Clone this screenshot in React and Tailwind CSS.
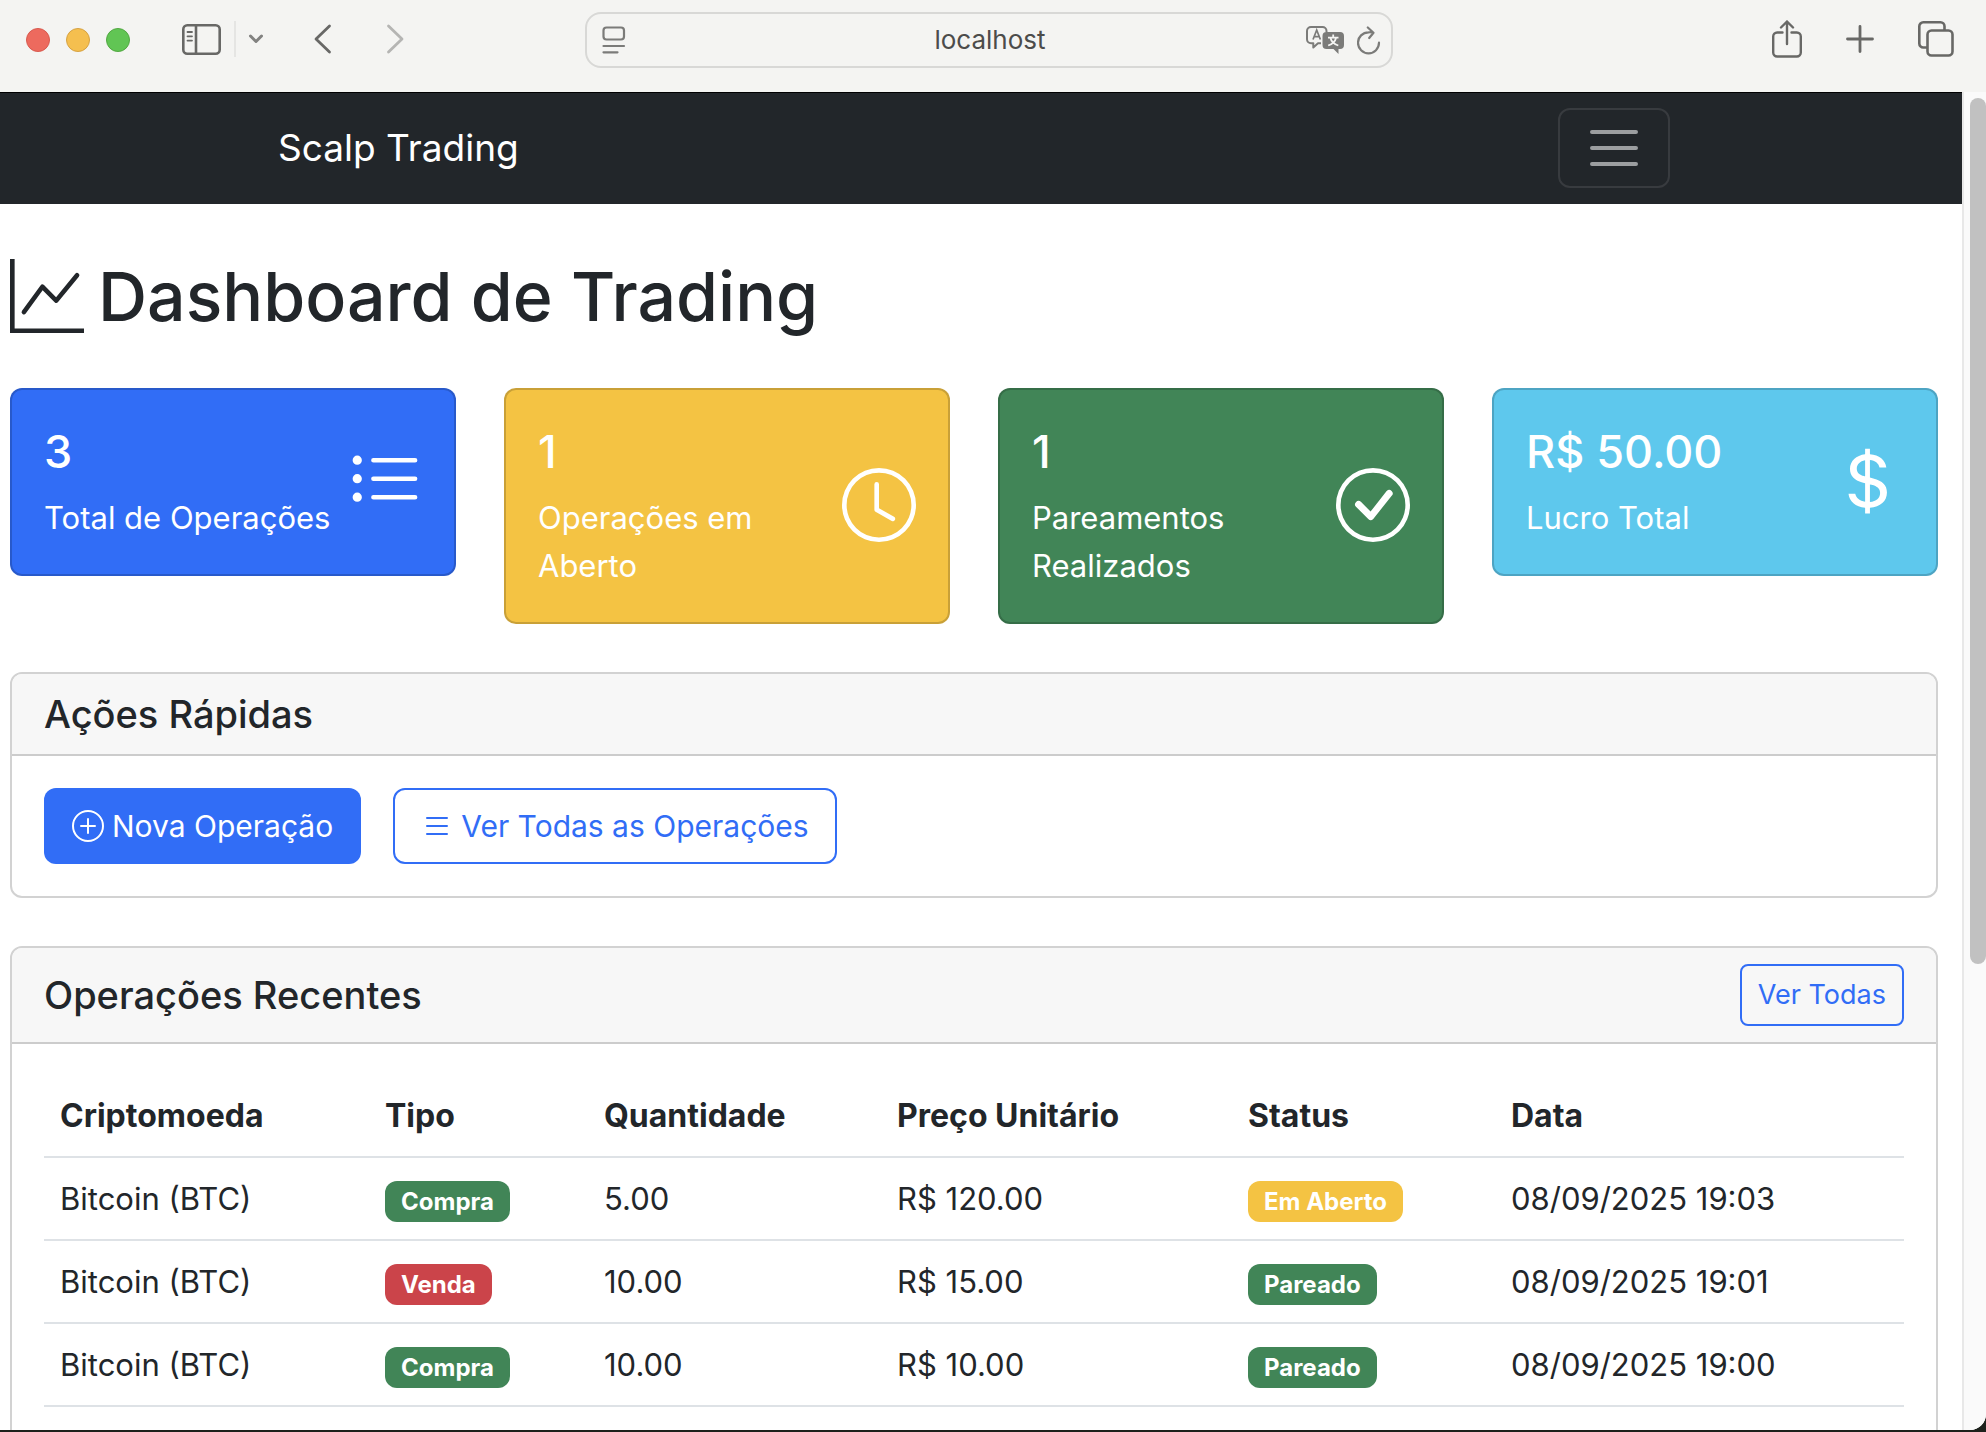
import {
  BsCheckCircle,
  BsClock,
  BsCurrencyDollar,
  BsGraphUp,
  BsList,
  BsListUl,
  BsPlusCircle,
} from "react-icons/bs";

const stats = [
  { value: "3", label: "Total de Operações", Icon: BsListUl, color: "bg-[#316df6]" },
  { value: "1", label: "Operações em Aberto", Icon: BsClock, color: "bg-[#f4c343]" },
  { value: "1", label: "Pareamentos Realizados", Icon: BsCheckCircle, color: "bg-[#418557]" },
  { value: "R$ 50.00", label: "Lucro Total", Icon: BsCurrencyDollar, color: "bg-[#5ec8ed]" },
];

const columns = [
  { title: "Criptomoeda", width: "w-[325px]" },
  { title: "Tipo", width: "w-[219px]" },
  { title: "Quantidade", width: "w-[293px]" },
  { title: "Preço Unitário", width: "w-[351px]" },
  { title: "Status", width: "w-[263px]" },
  { title: "Data", width: "w-[409px]" },
];

const operations = [
  { type: "Compra", amount: "5.00", price: "R$ 120.00", status: "Em Aberto", date: "08/09/2025 19:03" },
  { type: "Venda", amount: "10.00", price: "R$ 15.00", status: "Pareado", date: "08/09/2025 19:01" },
  { type: "Compra", amount: "10.00", price: "R$ 10.00", status: "Pareado", date: "08/09/2025 19:00" },
];

const badgeColors = {
  Compra: "bg-[#418557]",
  Venda: "bg-[#cb444a]",
  "Em Aberto": "bg-[#f4c343]",
  Pareado: "bg-[#418557]",
};

function Badge({ children }) {
  return (
    <span
      className={`mt-1 inline-block rounded-xl px-4 py-2 text-[24px] leading-[25px] font-bold text-white ${badgeColors[children]}`}
    >
      {children}
    </span>
  );
}

function BrowserToolbar() {
  return (
    <header className="grid h-[92px] shrink-0 grid-cols-[1fr_808px_1fr] bg-[#f4f4f2] pr-2 text-[#686866]">
      <div className="flex h-[78px] items-center pl-[26px]">
        <div className="flex gap-4 pt-0.5">
          <span className="size-6 rounded-full border border-[#d85a4f] bg-[#ed6a5e]" />
          <span className="size-6 rounded-full border border-[#d6a243] bg-[#f5bf4f]" />
          <span className="size-6 rounded-full border border-[#52a842] bg-[#61c554]" />
        </div>
        <button aria-label="Barra lateral" className="ml-[52px]">
          <svg width="39" height="31" viewBox="0 0 39 31" fill="none" stroke="currentColor" strokeWidth="2.6">
            <rect x="1.3" y="1.3" width="36.4" height="28.4" rx="4" />
            <path d="M14 1v29" />
            <path d="M5.5 8h4.500M5.500 12.300h4.500M5.500 16.600h4.500" strokeWidth="1.800" strokeLinecap="round" />
          </svg>
        </button>
        <span className="ml-[13px] h-9 w-0.5 bg-[#e5e5e3]" />
        <button aria-label="Opções da barra lateral" className="ml-3 text-[#828280]">
          <svg width="16" height="10" viewBox="0 0 16 10" fill="none" stroke="currentColor" strokeWidth="3" strokeLinecap="round" strokeLinejoin="round">
            <path d="M2.500 2L8 7.500L13.500 2" />
          </svg>
        </button>
        <button aria-label="Voltar" className="ml-[50px]">
          <svg width="18" height="30" viewBox="0 0 18 30" fill="none" stroke="currentColor" strokeWidth="2.8" strokeLinecap="round" strokeLinejoin="round">
            <path d="M15.500 2L2 15l13.500 13" />
          </svg>
        </button>
        <button aria-label="Avançar" className="ml-[54px] text-[#b5b5b3]">
          <svg width="18" height="30" viewBox="0 0 18 30" fill="none" stroke="currentColor" strokeWidth="2.8" strokeLinecap="round" strokeLinejoin="round">
            <path d="M2.500 2L16 15L2.500 28" />
          </svg>
        </button>
      </div>

      <div className="mt-3 flex h-14 items-center rounded-2xl border-2 border-[#d8d8d6] pr-2.5 pl-[15px] text-[#7b7b79]">
        <svg width="24" height="28" viewBox="0 0 24 28" fill="none" stroke="currentColor" strokeWidth="2.200" strokeLinecap="round">
          <rect x="1.500" y="1.500" width="20.500" height="12" rx="3" />
          <path d="M1.500 20h20.500M1.500 26.300h14" />
        </svg>
        <input
          aria-label="Endereço"
          defaultValue="localhost"
          className="min-w-0 flex-1 bg-transparent pl-12 text-center text-[26px] leading-8 text-[#4c4c4b] outline-none"
        />
        <button aria-label="Traduzir">
          <svg width="39" height="29" viewBox="0 0 39 29" fill="none">
            <path d="M15 17.300h-3L7.300 21.500v-4.200H5a4 4 0 0 1-4-4V5a4 4 0 0 1 4-4h11.500a4 4 0 0 1 4 4v1" stroke="currentColor" strokeWidth="2" strokeLinejoin="round" />
            <path d="M7 13.500L10.700 4l3.700 9.500M8.300 10.700h4.800" stroke="currentColor" strokeWidth="1.700" />
            <path d="M20.500 6H34a4 4 0 0 1 4 4v9a4 4 0 0 1-4 4h-1.500v5L27.500 23h-7a4 4 0 0 1-4-4v-9a4 4 0 0 1 4-4z" fill="currentColor" />
            <path d="M27.200 8.500v2.500M22 11.700h10.500M30 12c-.8 3.500-3.300 6-7.800 7.500M24.500 12c.8 3.500 3.300 6 7.800 7.500" stroke="#f4f4f2" strokeWidth="1.800" />
          </svg>
        </button>
        <button aria-label="Recarregar" className="ml-3">
          <svg width="24" height="29" viewBox="0 0 24 29" fill="none" stroke="currentColor" strokeWidth="2.200" strokeLinecap="round" strokeLinejoin="round">
            <path d="M16 6.600C14.500 6.200 13 6.200 11.500 6.300A10.500 10.500 0 1 0 22 16.700M10.800 1.500l5.700 5.200-4.300 5.300" />
          </svg>
        </button>
      </div>

      <div className="flex h-[78px] items-center justify-end pr-6">
        <button aria-label="Compartilhar">
          <svg width="30" height="38" viewBox="0 0 30 38" fill="none" stroke="currentColor" strokeWidth="2.400" strokeLinecap="round" strokeLinejoin="round">
            <path d="M10.500 12.500H5.200a4 4 0 0 0-4 4v16a4 4 0 0 0 4 4h19.600a4 4 0 0 0 4-4v-16a4 4 0 0 0-4-4h-5.300" />
            <path d="M15 24V1.500M9 7.500l6-6 6 6" />
          </svg>
        </button>
        <button aria-label="Nova aba" className="ml-11">
          <svg width="28" height="28" viewBox="0 0 28 28" fill="none" stroke="currentColor" strokeWidth="2.800" strokeLinecap="round">
            <path d="M14 1.500v25M1.500 14h25" />
          </svg>
        </button>
        <button aria-label="Visão geral das abas" className="ml-11">
          <svg width="36" height="36" viewBox="0 0 36 36" fill="none" stroke="currentColor" strokeWidth="2.600">
            <rect x="9.500" y="9.500" width="25" height="25" rx="4" />
            <path d="M9.500 26.500H5.300a4 4 0 0 1-4-4V5.300a4 4 0 0 1 4-4h17.200a4 4 0 0 1 4 4V9.500" />
          </svg>
        </button>
      </div>
    </header>
  );
}

function Navbar() {
  return (
    <nav className="border-t border-black bg-[#22262a] pr-3.5">
      <div className="mx-auto flex max-w-[1440px] items-center justify-between px-6 pt-[15px] pb-4">
        <a href="#" className="text-[37px] leading-[60px] text-white">
          Scalp Trading
        </a>
        <button
          aria-label="Abrir menu"
          className="flex h-20 w-28 items-center justify-center rounded-xl border-2 border-[#383b3f]"
        >
          <svg width="60" height="60" viewBox="0 0 30 30" stroke="#9c9ea0" strokeWidth="2" strokeLinecap="round">
            <path d="M4 7h22M4 15h22M4 23h22" />
          </svg>
        </button>
      </div>
    </nav>
  );
}

function StatCard({ value, label, Icon, color }) {
  return (
    <div className={`flex items-center justify-between gap-4 rounded-xl border-2 border-black/[.175] p-8 text-white ${color}`}>
      <div>
        <h4 className="mb-3.5 pt-0.5 text-[45px] leading-[56px] font-medium">{value}</h4>
        <p className="text-[31px] leading-[48px]">{label}</p>
      </div>
      <div className="shrink-0 pb-0.5">
        <Icon className="size-[74px]" />
      </div>
    </div>
  );
}

export default function App() {
  return (
    <div className="flex h-screen flex-col overflow-hidden bg-[#1d211c] pb-0.5 font-[Inter,sans-serif] text-[#22262a]">
      <BrowserToolbar />
      <div className="flex min-h-0 flex-1 overflow-hidden rounded-br-2xl bg-white">
        <div className="min-w-0 flex-1 overflow-hidden">
          <Navbar />
          <main className="pt-12 pr-6 pl-2.5">
            <h1 className="mb-12 flex items-center gap-3.5 text-[68px] leading-[88px] font-medium">
              <BsGraphUp className="size-[74px]" />
              Dashboard de Trading
            </h1>

            <div className="mb-12 grid grid-cols-4 items-start gap-12">
              {stats.map((stat) => (
                <StatCard key={stat.label} {...stat} />
              ))}
            </div>

            <section className="mb-12 overflow-hidden rounded-xl border-2 border-[#d2d2d2]">
              <div className="border-b-2 border-[#cccccc] bg-[#f7f7f7] px-8 py-4">
                <h5 className="text-[38px] leading-[48px] font-medium">Ações Rápidas</h5>
              </div>
              <div className="flex gap-8 p-8">
                <button className="flex h-[76px] items-center gap-2 rounded-xl bg-[#316df6] px-7 text-[30px] text-white">
                  <BsPlusCircle className="size-8" />
                  Nova Operação
                </button>
                <button className="flex h-[76px] items-center gap-2 rounded-xl border-2 border-[#316df6] px-[26px] text-[30px] text-[#316df6]">
                  <BsList className="size-8" />
                  Ver Todas as Operações
                </button>
              </div>
            </section>

            <section className="rounded-xl border-2 border-[#d2d2d2]">
              <div className="flex items-center justify-between rounded-t-[10px] border-b-2 border-[#cccccc] bg-[#f7f7f7] px-8 py-4">
                <h5 className="text-[38px] leading-[48px] font-medium">Operações Recentes</h5>
                <a
                  href="#"
                  className="flex h-[62px] items-center rounded-lg border-2 border-[#316df6] px-4 text-[27px] text-[#316df6]"
                >
                  Ver Todas
                </a>
              </div>
              <div className="p-8">
                <table className="w-full table-fixed text-left text-[31px] leading-[48px]">
                  <thead>
                    <tr className="h-[81px] border-b-2 border-[#dee2e6]">
                      {columns.map(({ title, width }) => (
                        <th key={title} className={`px-4 text-[32px] font-bold ${width}`}>
                          {title}
                        </th>
                      ))}
                    </tr>
                  </thead>
                  <tbody>
                    {operations.map(({ type, amount, price, status, date }) => (
                      <tr key={date} className="h-[83px] border-b-2 border-[#dee2e6]">
                        <td className="px-4">Bitcoin (BTC)</td>
                        <td className="px-4">
                          <Badge>{type}</Badge>
                        </td>
                        <td className="px-4">{amount}</td>
                        <td className="px-4">{price}</td>
                        <td className="px-4">
                          <Badge>{status}</Badge>
                        </td>
                        <td className="px-4">{date}</td>
                      </tr>
                    ))}
                  </tbody>
                </table>
              </div>
            </section>
          </main>
        </div>
        <div className="w-6 shrink-0 border-l-2 border-[#e8e8e8] bg-[#fafafa] pt-1.5 pl-1.5">
          <div className="h-[65%] rounded-full bg-[#c1c1c1]" />
        </div>
      </div>
    </div>
  );
}
